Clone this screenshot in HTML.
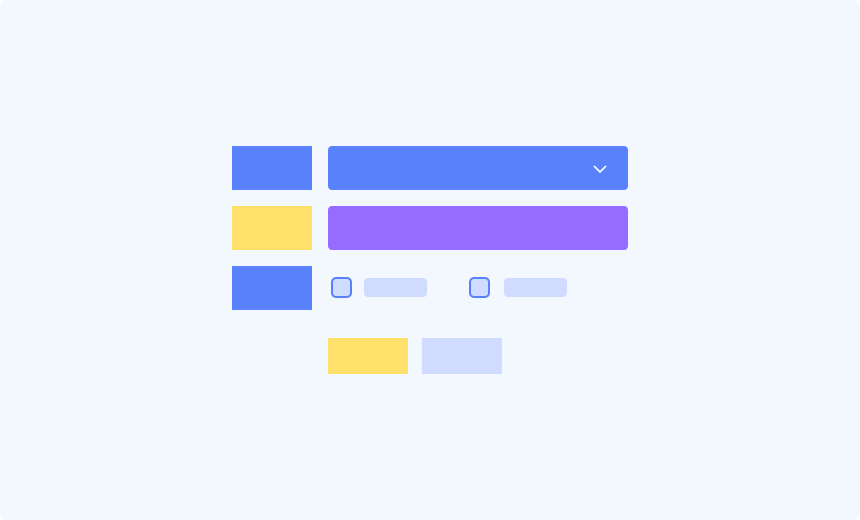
<!DOCTYPE html>
<html><head><style>
html,body{margin:0;background:#fff}
body{width:860px;height:520px;position:relative;overflow:hidden}
div{position:absolute}
</style></head><body>
<div style="left:0;top:0;width:860px;height:520px;background:#f3f8ff;border-radius:6px"></div>
<div style="left:232px;top:146px;width:80px;height:44px;background:#5881fb"></div>
<div style="left:328px;top:146px;width:300px;height:44px;background:#5881fb;border-radius:4px"></div>
<svg style="position:absolute;left:592px;top:162px" width="16" height="14"><path d="M2 4 L8 10 L14 4" fill="none" stroke="#fff" stroke-width="1.6"/></svg>
<div style="left:232px;top:206px;width:80px;height:44px;background:#ffe06a"></div>
<div style="left:328px;top:206px;width:300px;height:44px;background:#966bff;border-radius:4px"></div>
<div style="left:232px;top:266px;width:80px;height:44px;background:#5881fb"></div>
<div style="left:331px;top:277px;width:17px;height:17px;border:2px solid #5881fb;border-radius:5px;background:#d0dcff"></div>
<div style="left:364px;top:278px;width:63px;height:19px;background:#d0dcff;border-radius:4px"></div>
<div style="left:469px;top:277px;width:17px;height:17px;border:2px solid #5881fb;border-radius:5px;background:#d0dcff"></div>
<div style="left:504px;top:278px;width:63px;height:19px;background:#d0dcff;border-radius:4px"></div>
<div style="left:328px;top:338px;width:80px;height:36px;background:#ffe06a"></div>
<div style="left:422px;top:338px;width:80px;height:36px;background:#d0dcff"></div>
</body></html>
